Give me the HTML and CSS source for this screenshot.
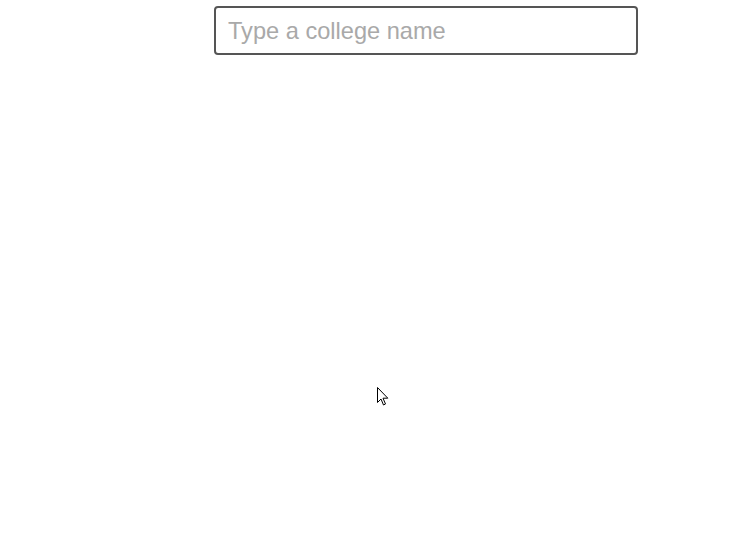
FILE: index.html
```html
<!DOCTYPE html>
<html>
<head>
<meta charset="utf-8">
<link rel="stylesheet" href="styles.css">
</head>
<body>
<div class="page">
  <input class="search" type="text" placeholder="Type a college name">
</div>
<svg class="cursor" width="12" height="20" viewBox="0 0 12 20"><path d="M0.5 0.5 L0.5 15.5 L4 12 L6.5 18 L8.5 17 L6 11.2 L10.8 11.2 Z" fill="#fff" stroke="#000" stroke-width="1"/></svg>
</body>
</html>
```
FILE: styles.css
```css
html, body { margin: 0; padding: 0; background: #fff; }
body { font-family: "Liberation Sans", Arial, sans-serif; }
.page { padding: 6px 0 0 214px; }
.search {
  display: block;
  box-sizing: border-box;
  width: 424px;
  height: 49px;
  border: 2px solid #555;
  border-radius: 4px;
  padding: 2px 12px 0;
  font-family: "Liberation Sans", Arial, sans-serif;
  font-size: 23.6px;
  color: #333;
  outline: none;
}
.search::placeholder { color: #a9a9a9; }
.cursor { position: absolute; left: 377px; top: 387px; }
```
